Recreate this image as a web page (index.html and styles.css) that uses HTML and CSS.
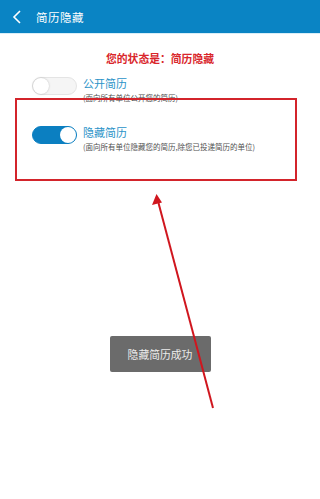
FILE: index.html
```html
<!DOCTYPE html>
<html lang="zh-CN">
<head>
    <meta charset="UTF-8">
    <title>简历隐藏</title>
    <link rel="stylesheet" href="styles.css">
</head>
<body>

<div id="topBar">
    <svg class="backIcon" width="10" height="14" viewBox="0 0 10 14">
        <path d="M8 1 L2 7 L8 13" fill="none" stroke="#ffffff" stroke-width="1.6"/>
    </svg>
    <span class="topTitle">简历隐藏</span>
</div>

<p id="status">您的状态是：简历隐藏</p>

<div class="optionList">
    <div class="option">
        <div class="toggle"><span class="knob"></span></div>
        <div class="optionText">
            <p class="optionTitle">公开简历</p>
            <p class="optionNote">(面向所有单位公开您的简历)</p>
        </div>
    </div>
    <div class="option">
        <div class="toggle on"><span class="knob"></span></div>
        <div class="optionText">
            <p class="optionTitle">隐藏简历</p>
            <p class="optionNote">(面向所有单位隐藏您的简历,除您已投递简历的单位)</p>
        </div>
    </div>
</div>

<div class="toastWrap">
    <div class="toast">隐藏简历成功</div>
</div>

<div class="markBox"></div>
<svg class="markArrow" width="320" height="499" viewBox="0 0 320 499">
    <line x1="213" y1="408" x2="158.5" y2="203" stroke="#d0161e" stroke-width="2"/>
    <polygon points="156.5,194 152,205 162,202.5" fill="#d0161e"/>
</svg>

</body>
</html>
```

FILE: styles.css
```css
body {
    margin: 0;
    width: 320px;
    height: 499px;
    background-color: #ffffff;
    font-family: "Noto Sans CJK SC", "Noto Sans", sans-serif;
    position: relative;
    overflow: hidden;
}
p {
    margin: 0;
}
#topBar {
    height: 33px;
    background-color: #0a84c4;
    display: flex;
    align-items: center;
    padding-left: 12px;
    border-bottom: 1px solid #d8eef8;
}
.backIcon {
    margin-right: 14px;
}
.topTitle {
    color: #ffffff;
    font-size: 11.5px;
    letter-spacing: 0.5px;
}
#status {
    margin-top: 17px;
    text-align: center;
    color: #d9262b;
    font-size: 10.8px;
    font-weight: bold;
    line-height: 14px;
}
.optionList {
    display: flex;
    flex-direction: column;
    gap: 20px;
    margin-top: 11px;
    padding-left: 32px;
}
.option {
    display: flex;
    align-items: flex-start;
}
.toggle {
    width: 45px;
    height: 18px;
    box-sizing: border-box;
    border-radius: 9px;
    background-color: #f5f5f5;
    border: 1px solid #e4e4e4;
    position: relative;
    margin-top: 1px;
    margin-right: 6px;
    flex-shrink: 0;
}
.knob {
    position: absolute;
    top: 0;
    left: 0;
    width: 16px;
    height: 16px;
    border-radius: 50%;
    background-color: #ffffff;
    box-shadow: 0 0 2px rgba(0, 0, 0, 0.25);
}
.toggle.on {
    background-color: #0b7fc1;
    border-color: #0b7fc1;
}
.toggle.on .knob {
    left: auto;
    right: 0;
    box-shadow: none;
}
.optionText {
    display: flex;
    flex-direction: column;
}
.optionTitle {
    color: #2b93c8;
    font-size: 11px;
    line-height: 15px;
}
.optionNote {
    color: #505050;
    font-size: 7.5px;
    line-height: 14px;
}
.toastWrap {
    display: flex;
    justify-content: center;
    margin-top: 182px;
}
.toast {
    width: 101px;
    height: 36px;
    display: flex;
    align-items: center;
    justify-content: center;
    background-color: #6b6b6b;
    color: #ececec;
    font-size: 10.8px;
    border-radius: 2px;
}
.markBox {
    position: absolute;
    left: 15px;
    top: 98px;
    width: 278px;
    height: 79px;
    border: 2px solid #d3242b;
}
.markArrow {
    position: absolute;
    left: 0;
    top: 0;
}
```
